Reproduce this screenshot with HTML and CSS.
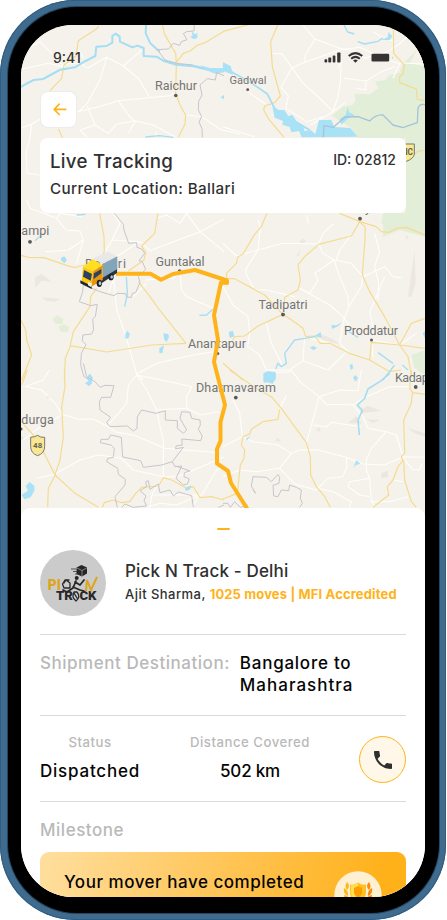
FILE: index.html
```html
<!DOCTYPE html>
<html lang="en">
<head>
<meta charset="utf-8">
<meta name="viewport" content="width=device-width, initial-scale=1">
<title>Live Tracking</title>
<link rel="stylesheet" href="styles.css">
</head>
<body>
<div class="phone">
<div class="bezel">
<main class="screen">
<section class="tracking">
<svg class="map" viewBox="21 25 404 500" width="404" height="500" aria-hidden="true">
  <rect x="21" y="25" width="404" height="500" fill="#f5f2eb"/>
  <g transform="scale(.33333)">
    <g class="road">
      <path d="M62 155L120 125L155 160L192 200M195 192L240 188L262 205L320 172L370 198L415 235L448 290M370 198L400 172L425 150M320 172L300 240L262 310L235 336M232 335L305 318L355 302L510 287L520 280M355 302L385 345L405 365L385 400M262 318L285 375L325 400L350 372L405 362L460 375L525 410M285 375L240 390L262 412M62 385L95 372L125 355M95 372L88 425L78 455L82 520L118 525M555 345L605 350L665 390L720 402M190 200L145 190L62 208M236 150L250 175M470 395L465 412"/>
    </g>
    <g class="yellow">
      <path d="M296 78L288 88L235 122L228 168L192 195L185 235L150 272M175 387L188 413M487 75L494 103L527 160L529 190L527 280L540 315L557 345L555 372L535 412M527 190L550 160L570 153L590 137L615 128L672 94"/>
    </g>
    <g class="river"><path stroke-width="6" d="M63 261Q85 247 101 240L129 237L146 228L181 209L225 202L249 187L286 168L289 140L320 138L337 128L337 108L347 101L359 110L360 125L397 142L412 137L431 144L431 168L470 170L490 182L530 192M438 75L437 100L451 130L479 155"/><path stroke-width="7" d="M490 182L529 194L580 198L630 210L672 210"/><path stroke-width="4" d="M436 411L478 407L520 412"/></g>
    <path class="water" d="M571 112L578 106L575 94L586 103L592 98L592 113L582 118ZM661 292L672 285V298ZM600 196L628 204L672 205V217L645 221L620 211Z"/>
    <path class="border" d="M583 75L582 93L560 95L550 101L561 119L544 125L539 136L520 130L506 147L472 149L495 180L530 190L578 195M672 227L650 218L646 240L622 236L600 255L606 285L596 304L595 330L605 350L597 366L606 386L607 412"/>
  </g>
  <g transform="translate(223 0) scale(.33333)">
    <path class="forest" d="M606 75H545L582 149L565 167L540 190L529 218L500 225L487 240L456 245L466 265L440 283L395 281L397 303L388 316L360 320L327 347L385 385L405 414L548 415V640H482L480 710L530 690L606 710Z"/>
    <path class="land" d="M530 75L595 75L606 100V200L560 190L582 149L568 130Z"/>
    <g class="road"><path d="M150 160L178 162L207 203L245 187L247 165L276 117L240 75M245 187L350 150L410 142L470 170L520 188L606 192M276 117L350 145L395 154L425 175L492 155L525 135L570 95M207 203L240 250L280 285L330 335L367 307M345 205L355 180L352 245L345 290L330 335L262 375M207 203L174 262L196 287L188 325L252 365L300 350M364 235L430 243L475 215L515 200M430 243L427 270L400 265M450 95L475 110L515 125M76 277L127 312M0 380L95 410M530 190L510 235"/></g>
    <g class="yellow"><path d="M0 94L75 75M164 75L143 125L148 200L172 288L155 308L125 318L122 330L138 358L183 412M511 75L512 160L544 195L540 222L530 230L530 248L580 267L583 298L606 302M553 480L583 455L606 450"/></g>
    <g class="river"><path stroke-width="5" d="M0 195L30 218L82 247L133 282L155 325L195 352L260 390"/><path stroke-width="4" d="M363 75L374 96L394 102M404 125L425 132L465 124L480 113"/></g>
    <path class="water" d="M0 187L23 198L30 224L0 213ZM147 313L162 330L184 330L196 349L208 344L226 372L245 378L243 393L263 390L277 402L288 360L325 360L334 381L382 384L404 410L236 412L228 393L205 397L200 381L178 374L180 363L155 353ZM355 374L350 358L368 345L374 321L378 337L395 346L373 357ZM475 120L495 111L496 96L508 108L500 120Z"/>
    <path class="border lake-border" d="M301 412L303 377L331 382L366 351L405 350L440 363Q460 342 480 345L510 375L540 383L565 374L583 368L585 325Q590 310 606 314"/>
    <path d="M540 432H574V463Q572 476 550 484L540 480Z" fill="#f9e892" stroke="#77776e" stroke-width="3"/>
    <text x="536" y="465" class="shield-label" font-size="25">NC</text>
  </g>
  <g transform="translate(0 200) scale(.33333)">
    <g fill="#ebe8df"><path d="M105 232L125 222L155 245L125 242L105 265ZM125 292L182 297L165 305L140 304Z"/></g>
    <path class="forest" d="M158 358L172 346L191 358L187 372L166 371ZM175 380L194 373L208 382L202 397L182 395Z"/>
    <g class="road"><path d="M80 0L90 25L170 55L198 90L240 93L250 120L205 150L135 155M170 55L180 40L245 50M250 120L230 190M315 155L336 120L360 70L340 40M336 120L420 125L450 152L520 125L600 95L672 58M600 95L560 40L540 70L500 45L470 55M600 95L672 155M350 170L380 150L420 125M340 225L350 330L375 400L410 522L470 490L580 465L640 455M435 240L520 235L540 215L545 270L560 290L640 325M410 522L430 540M440 250L400 290M345 225L325 280"/></g>
    <g class="yellow"><path d="M63 166L85 172L132 173L202 197L225 203L240 198L300 185L313 155L312 110L299 40M474 40L464 100L425 138L437 158L432 180L385 213M415 245L450 290L475 325L558 430M558 430L455 435L320 456L210 437M290 265L272 290L270 320L220 395L210 440L196 475L193 540M63 360L77 390L80 420L95 465L65 540"/></g>
    <g class="river"><path stroke-width="4" d="M105 122L120 109M230 45L257 43M379 230L382 282L374 320M598 346L620 345L638 328"/></g>
    <path class="water" d="M183 173L193 169L201 181L193 190L183 181ZM376 402L382 392L390 402L385 415L376 417ZM490 400L505 402L507 411L500 426L493 419ZM478 445L492 435L487 460L478 458ZM262 530L270 521L279 534L272 540L262 539Z"/>
    <path class="border" d="M343 40L370 73L372 90L386 130L410 128L411 142L425 147L434 160L417 182L427 185L437 208L415 230L420 247L407 278L397 280L394 292L380 291L377 281L351 280L342 287L300 275L250 254L248 275L238 305L272 317L292 313L286 350L278 357L281 389L275 402L249 405L247 422L258 434L244 460L242 496L252 530L270 540"/>
  </g>
  <g transform="translate(223 200) scale(.33333)">
    <path class="forest" d="M480 40H606V103L550 82L520 92L475 70ZM565 465L606 450V516L575 505Z"/>
    <g fill="#ece8e0"><path d="M230 125L240 115L250 125L232 132ZM220 170L230 150V165ZM555 290L575 150L578 250L565 290ZM545 115L553 105L556 117ZM285 400L325 415L355 435L300 420Z"/></g>
    <g class="road"><path d="M0 130L40 168L105 150L112 80L105 60M105 150L70 205L68 220L95 270L130 270L215 290M105 150L180 130L287 132L300 160L333 180L275 220L285 240L260 280L230 265L320 315L360 350L400 405M333 180L350 230L375 290L377 320L362 360L350 430L380 460M333 180L385 190L420 230L485 200L510 230L535 233M465 300L467 250L455 200L470 155L455 100M420 230L415 260L377 320M340 180L350 150L385 105M333 70L300 100L287 132M257 70L250 45M485 230L445 325L440 335L450 385L510 400M0 260L30 315L75 350L80 400L74 440L110 465L130 510L200 510L240 482L315 510L365 460M130 370L145 430L180 500M240 482L245 410L320 430M450 470L445 420L530 435L580 400"/></g>
    <g class="yellow"><path d="M132 40L115 80L95 103L60 162L45 170L40 190L10 220L12 236L35 236L125 285L180 343L220 370L240 385L248 410L275 408L292 430L320 430L380 460L440 480L500 515L535 510M180 343L105 378L65 408L35 410L30 420M183 320L185 292L225 270L232 240L225 195L245 170L287 133L385 108L410 65L350 40M410 65L427 82L425 130L418 225L440 275L485 350L530 435L555 470L565 525M410 65L460 80L475 95L500 97L520 85L550 82L606 105M440 480L445 427L530 435L606 445M530 435L565 370L606 355M0 490L60 540"/></g>
    <g class="river"><path stroke-width="4" d="M290 405L265 412L215 420L185 460L190 490L175 500L165 490L158 507M370 390L405 412M465 458L510 490M480 540L515 495M538 495L555 510"/></g>
    <path class="water" d="M17 395L30 393L34 409L20 414ZM325 375L340 376L357 367L345 379L327 387ZM280 404L293 396L296 413L285 412ZM261 443L270 438L282 443L272 451ZM380 494L388 492L391 505L383 510ZM122 523L134 515L158 517L158 536L148 550L121 545ZM599 400L606 393V415Z"/>
  </g>
  <g transform="translate(0 370) scale(.33333)">
    <g class="road"><path d="M77 50L125 60L165 100L185 132L235 148L280 147L325 170L350 187L400 195L495 235L655 248M75 50L130 30L148 0M70 210L115 175L185 135M110 325L165 312L240 270L295 255L365 265L400 300L490 320L530 320L560 310L672 260M410 15L440 60L470 120L480 170L490 210L490 320L455 375L450 412M410 15L385 45L380 100L325 165M410 15L510 35L575 50L560 80L560 115L600 135L655 125M470 120L560 115M455 375L580 375L605 375L650 300L672 290M440 412L480 400L530 405L600 375L575 412"/></g>
    <g class="yellow"><path d="M193 0L195 50L185 110L190 200L180 270L163 320L145 355L143 412M63 155L100 195L125 235L165 315L225 370L295 412M307 412L313 398L338 390L365 398L390 394L407 370L425 352L475 348L490 323L515 330L560 355L580 350L600 383L635 380L672 390M65 45L82 0"/></g>
    <path class="forest" d="M63 195L72 205L63 212ZM140 77L149 81L142 88Z"/>
    <path class="water" d="M263 20L270 11L277 23L276 40L267 49L255 39L265 33ZM65 374L84 362L77 348L89 336L103 348V362L92 382L73 388ZM555 355L568 348L575 347L568 360L557 362Z"/>
    <path class="border" d="M250 -20L260 20L285 35L300 52L315 46L342 47L332 82L305 82L298 95L300 120L332 142L320 157L330 170L382 168L400 183L411 175L412 140L425 120L468 130L496 122L496 150L532 152L532 175L550 190L560 180L540 145L545 125L570 127L575 145L600 150L601 165L595 178L607 198L602 212L545 207L547 225L528 228L527 237L550 232L517 275L485 285L430 292L422 272L368 261L364 202L332 195L325 208L303 208L301 218L333 225L343 235L340 262L323 265L320 275L353 295L355 313L376 328L375 345L345 380L352 412M365 412L375 402L400 412L440 408L432 392L438 378L420 362L440 350L437 335L445 332L450 358L475 342L480 368L510 360L520 378L535 366L575 377L580 412M517 275L525 290L545 288L535 310L528 325L550 345L562 342L568 327L552 320L553 308L570 303L527 288M655 412L672 405"/>
    <path d="M92 202Q105 201 113 196Q120 203 134 202V229Q134 250 113 257Q92 250 92 229Z" fill="#f9e892" stroke="#77776e" stroke-width="3"/>
    <text x="113" y="235" class="shield-label" text-anchor="middle" font-size="24">48</text>
  </g>
  <g transform="translate(223 370) scale(.33333)">
    <path class="forest" d="M580 0H606V14Z"/>
    <g fill="#ebe7de"><path d="M412 120L435 108L475 122L415 130ZM375 160L400 138L415 160ZM430 148L470 150L450 160ZM475 310L495 302V320L475 325ZM555 175L606 190V200L575 190ZM278 180L290 172L293 185ZM155 212L165 203L175 216Z"/></g>
    <g class="road"><path d="M190 75L170 118M30 90L50 130L58 200L0 230M58 200L90 215L165 225L205 250L170 295L100 305L50 300L0 320M205 250L230 240L285 240L370 262L420 282L485 285L540 260L606 262M170 295L215 342L280 360L315 325L360 320L372 290L370 262M250 220L275 130L288 80L230 35L205 0M205 5L125 10M288 80L350 60L405 62L415 0M288 80L310 103L390 105L430 80L500 50L560 50M390 105L420 140L435 175L490 185L520 195L540 260M270 165L310 170L325 157L415 170M490 185L445 235L430 270L430 300L440 325L445 390L455 410M440 325L380 335L375 350L410 375L440 380M445 395L500 395L555 380M285 355L330 365L385 395L380 412M510 330L540 335M540 265L570 298L590 300L597 280"/></g>
    <g class="yellow"><path d="M20 0L60 28L100 55L145 80L175 115L250 218L262 260L263 315L280 350L305 380L322 412M170 118L165 148L120 155L85 178L80 192L60 200L55 225L65 240L63 265L52 285L43 370L0 387M565 0L560 55L570 68L606 73M568 68L565 100L542 150L545 250L535 260L540 272L525 290L510 330L493 350L497 375L450 412M542 270L545 330L565 395L580 412"/></g>
    <g class="river"><path stroke-width="5" d="M500 10L475 32L435 57L425 85L403 105L418 122L405 150L409 195"/></g>
    <path class="water" d="M121 10L134 4L158 7L158 27L148 42L137 35L123 38ZM390 23L397 15L405 24L398 35ZM390 296L400 271L412 281L398 285ZM68 206L83 198L73 210Z"/>
    <path class="border" d="M0 400L15 400L22 412L35 395L52 412L75 405M90 360L98 370L85 348L90 320L130 322L145 335L165 313L170 322L168 340L150 346L152 378L165 380L175 360L197 362L200 345L220 352L235 360L232 385L238 400L230 412"/>
  </g>
  <g fill="#595959"><circle cx="175.800" cy="95.500" r="1.800"/><circle cx="247.700" cy="89.700" r="1.400"/><circle cx="30" cy="241.800" r="1.900"/><circle cx="179.600" cy="271" r="1.700"/><circle cx="360" cy="218.700" r="1.900"/><circle cx="283" cy="314.500" r="1.900"/><circle cx="371.500" cy="340" r="1.500"/><circle cx="217.700" cy="353.500" r="1.600"/><circle cx="235.800" cy="397.600" r="1.900"/><circle cx="415.700" cy="387" r="1.900"/><circle cx="21" cy="429" r="1.600"/></g>
  <g class="place">
    <text x="155" y="90" textLength="42">Raichur</text>
    <text x="229.500" y="84" font-size="11" textLength="37">Gadwal</text>
    <text x="21.300" y="235" textLength="28">ampi</text>
    <text x="85" y="268" textLength="41">Bellari</text>
    <text x="155.500" y="265.500" textLength="49">Guntakal</text>
    <text x="358" y="212" textLength="13">ly</text>
    <text x="258.500" y="308.500" textLength="49">Tadipatri</text>
    <text x="344" y="334.500" textLength="54">Proddatur</text>
    <text x="188" y="347.500" textLength="58">Anantapur</text>
    <text x="196" y="392" textLength="80">Dharmavaram</text>
    <text x="395" y="381.500" textLength="40">Kadapa</text>
    <text x="21.300" y="423.500" textLength="32.500">durga</text>
  </g>
  <path class="route" d="M116 273.700H150.500L161 279.700L173 274L195 270L227 280.500V283L221 282.500L214 315L218 340L214 362L225 405L220.500 422V441L217 449V463.500L228 471L231 483L248 510"/>
  <g transform="translate(70 245) scale(.33333)">
    <path d="M68 40L116 20L142 36L98 57Z" fill="#e8e8e8"/>
    <path d="M98 57L142 34V76L98 103Z" fill="#83a5ba"/>
    <path d="M82 108L141 73V84L88 119Z" fill="#293541"/>
    <path d="M39 65L68 42L98 61L70 78Z" fill="#ffdf20"/>
    <path d="M39 65L70 78L64 125L35 110Z" fill="#ffc710"/>
    <path d="M70 78L98 61V105L64 125Z" fill="#e9950c"/>
    <path d="M42 75L66 87L62 107L39 95ZM72 85L94 72V85L70 103Z" fill="#2a4460"/>
    <path d="M31 106L65 123V132L31 115Z" fill="#1f2930"/>
    <path d="M54 111L66 115L64 127L54 121Z" fill="#f5edd8"/>
    <ellipse cx="88" cy="115" rx="8" ry="11" fill="#17202a"/><ellipse cx="90" cy="115" rx="4" ry="6" fill="#b9c0c6"/>
    <ellipse cx="123" cy="96" rx="8" ry="10" fill="#17202a"/><ellipse cx="125" cy="96" rx="4" ry="5" fill="#b9c0c6"/>
  </g>
</svg>
<header class="status-bar">
  <span class="time">9:41</span>
  <svg width="70" height="14" viewBox="0 0 70 14" fill="#353333">
    <rect x=".500" y="8.300" width="2.700" height="3.200" rx=".8"/><rect x="4.300" y="6.600" width="2.900" height="4.900" rx=".8"/><rect x="8.700" y="4.600" width="2.700" height="6.900" rx=".8"/><rect x="13.200" y="1.500" width="3.300" height="10" rx=".8"/>
    <g fill="none" stroke="#353333" stroke-width="2"><path d="M24.700 5.100Q31.400-.8 38.300 5.100M27.200 7.800Q31.400 4 35.800 7.800"/></g><path d="M29.100 9.400Q31.400 7.600 33.800 9.400L31.400 11.700Z"/>
    <rect x="47.500" y="2.800" width="17.700" height="7.700" rx="1.200"/><path d="M68.200 5.400Q69.400 6.500 68.200 8Z" fill="#aaa"/>
  </svg>
</header>
<button class="back" aria-label="Back"><svg width="14" height="13" viewBox="0 0 14 13" fill="none" stroke="#ffb31a" stroke-width="1.700" stroke-linecap="round" stroke-linejoin="round"><path d="M12.700 6.300H1.300M6.200 1.200L1.200 6.300L6.200 11.500"/></svg></button>
<div class="location-card">
  <div class="card-top"><h1>Live Tracking</h1><span class="shipment-id">ID: 02812</span></div>
  <p class="current">Current Location: Ballari</p>
</div>
</section>
<section class="sheet">
  <div class="handle"></div>
  <div class="mover">
    <svg class="logo" width="66" height="66" viewBox="40 550 66 66">
      <circle cx="73" cy="583" r="33" fill="#cbcbcb"/>
      <text x="47.800" y="590" class="brand" fill="#dda51b" font-size="14" textLength="13" lengthAdjust="spacingAndGlyphs">PI</text>
      <text x="56" y="600.300" class="brand" fill="#292929" font-size="13.500" textLength="17" lengthAdjust="spacingAndGlyphs">TR</text>
      <text x="79.500" y="600.300" class="brand" fill="#292929" font-size="13.500" textLength="17" lengthAdjust="spacingAndGlyphs">CK</text>
      <path d="M76.500 567.500L81.500 565L87 567.500V573.500L82 576.500L76.500 574Z" fill="#252525"/><path d="M77 568L82 570.500L86.800 568M82 570.500V576" stroke="#aaa" stroke-width=".7" fill="none"/>
      <path d="M71 569H76M73 571.500H77M75 574H78" stroke="#333" stroke-width=".8"/>
      <circle cx="76.700" cy="578" r="2" fill="#242424"/>
      <g fill="none" stroke="#282828" stroke-width="1.800" stroke-linecap="round" stroke-linejoin="round"><path d="M76 581L73 588L67 592L63 590M75 582L80 585L84 580M73 587L80 590L84 591"/><path stroke-width="1.300" d="M69 580L65 580L62.500 584L64 588L70 588M64 583L66 580L70 583V588M74 592Q71 597 76 601Q81 597 77 592ZM74 593L77 598"/></g>
      <path d="M86 591L87 580L91 590L97 577" stroke="#dda51b" stroke-width="2" fill="none"/>
    </svg>
    <div class="mover-text"><h2>Pick N Track - Delhi</h2><p class="agent">Ajit Sharma, <strong>1025 moves | MFI Accredited</strong></p></div>
  </div>
  <div class="destination"><span class="dest-label">Shipment Destination:</span><span class="dest-value">Bangalore to<br><span class="line-two">Maharashtra</span></span></div>
  <div class="stats">
    <div class="stat status-stat"><span class="stat-label">Status</span><span class="stat-value dispatched">Dispatched</span></div>
    <div class="stat distance-stat"><span class="stat-label">Distance Covered</span><span class="stat-value">502 km</span></div>
    <button class="call" aria-label="Call mover"><svg width="18" height="18" viewBox="3 3 18 18"><path fill="#302f2f" d="M6.620 10.790c1.440 2.830 3.760 5.140 6.590 6.590l2.200-2.200c.27-.27.670-.36 1.020-.24 1.120.37 2.330.57 3.570.57.550 0 1 .45 1 1V20c0 .55-.45 1-1 1-9.390 0-17-7.610-17-17 0-.55.450-1 1-1h3.500c.55 0 1 .45 1 1 0 1.250.2 2.450.57 3.570.110.350.030.740-.25 1.020l-2.200 2.200z"/></svg></button>
  </div>
  <h3>Milestone</h3>
  <div class="milestone"><p>Your mover have completed</p>
    <svg class="badge" width="48" height="48" viewBox="0 0 48 48"><circle cx="24" cy="24" r="23.700" fill="#fff0d1"/>
      <path fill="#ffc022" d="M24 11.500Q28 14.500 32 13.500V22Q31 30 24 33Q17 30 16 22V13.500Q20 14.500 24 11.500Z"/><path fill="#ffdf51" d="M24 12Q19 15 17 14V22Q18 29 24 32Z"/><path fill="#ff9d00" d="M24 15L28 17V22Q27 25 24 27Q21 25 20 22V17Z"/>
      <g fill="#ffb720"><path d="M13 11Q17 15 13 19Q10 15 13 11ZM10 17Q15 20 14 25Q9 23 10 17ZM10 24Q16 25 16 30Q10 30 10 24Z"/></g><g fill="#ff8b05"><path d="M35 11Q31 15 35 19Q38 15 35 11ZM38 17Q33 20 34 25Q39 23 38 17ZM38 24Q32 25 32 30Q38 30 38 24Z"/></g>
    </svg>
  </div>
</section>
</main>
</div>
</div>
</body>
</html>
```
FILE: styles.css
```css
* { box-sizing: border-box; }
body { margin: 0; background: #fff; font-family: Inter, "Noto Sans", sans-serif; color: #303030; }
h1, h2, h3, p { margin: 0; font-weight: 500; white-space: nowrap; }
button { padding: 0; font: inherit; }
.phone { width: 446px; height: 919.500px; padding: 7px 7.500px; border-radius: 75px; background: #3f6b8e; box-shadow: inset 0 0 0 1px #315d80; }
.bezel { width: 431px; height: 905.500px; padding: 18px 13.500px 15.500px; border-radius: 69px; background: #000; box-shadow: 0 0 0 1px #23455f; }
.screen { width: 404px; height: 872px; overflow: hidden; border-radius: 52px; background: #fff; }
.tracking { position: relative; height: 483px; padding: 0 19px; }
.map { position: absolute; left: 0; top: 0; z-index: 0; }
.status-bar, .back, .location-card { position: relative; z-index: 1; }
.status-bar { display: flex; justify-content: space-between; align-items: center; height: 66px; padding: 0 12.500px 0 13px; }
.time { color: #353333; font-size: 14px; line-height: 16px; font-weight: 500; }
.back { display: flex; align-items: center; justify-content: center; width: 37px; height: 37px; padding-left: 2px; border: 1px solid #ececec; border-radius: 8px; background: #fff; }
.location-card { height: 75px; margin-top: 10px; padding: 12px 10px; border-radius: 8px; background: #fff; }
.card-top { display: flex; justify-content: space-between; }
h1 { font-size: 18.700px; line-height: 23px; letter-spacing: .3px; }
.shipment-id { font-size: 14px; line-height: 20px; font-weight: 500; }
.current { margin-top: 6px; font-size: 15.200px; line-height: 20px; letter-spacing: .4px; }
.sheet { position: relative; z-index: 2; height: 389px; padding: 20px 19px 0; border-radius: 9px 9px 0 0; background: #fff; }
.handle { width: 13px; height: 2px; margin: 0 auto; border-radius: 1px; background: #ffb31a; }
.mover { display: flex; gap: 19px; height: 105px; padding-top: 19.500px; border-bottom: 1.500px solid #dadada; }
.mover-text { padding-top: 10px; }
h2 { font-size: 17px; line-height: 22px; letter-spacing: .17px; }
.agent { margin-top: 4px; font-size: 13px; line-height: 17px; letter-spacing: .46px; }
.agent strong { color: #ffb31a; font-weight: 700; letter-spacing: .14px; }
.destination { display: flex; gap: 10px; height: 81px; padding-top: 17px; border-bottom: 1.500px solid #dadada; font-size: 17px; line-height: 22px; font-weight: 500; white-space: nowrap; }
.dest-label, h3 { color: #b9b9b9; letter-spacing: .53px; }
.dest-value { color: #050505; letter-spacing: .75px; }
.line-two { letter-spacing: 1px; }
.stats { display: flex; align-items: flex-start; height: 86px; padding-top: 17px; border-bottom: 1.500px solid #dadada; font-weight: 500; white-space: nowrap; }
.stat { display: flex; flex-direction: column; align-items: center; gap: 9px; }
.status-stat { width: 100px; }
.distance-stat { width: 120px; margin-left: 50px; }
.stat-label { color: #b9b9b9; font-size: 13.200px; line-height: 18px; letter-spacing: .5px; }
.stat-value { color: #050505; font-size: 17px; line-height: 22px; letter-spacing: -.2px; }
.dispatched { letter-spacing: .8px; }
.call { display: flex; align-items: center; justify-content: center; width: 47px; height: 47px; margin: 3px 0 0 auto; border: 1px solid #ffb31a; border-radius: 50%; background: #fff8e9; }
h3 { margin-top: 17px; font-size: 17px; line-height: 22px; }
.milestone { display: flex; justify-content: space-between; height: 90px; margin-top: 11px; padding: 19px 24px; border-radius: 9px; color: #050505; background: linear-gradient(105deg, #ffdf9f 0%, #ffc557 48%, #ffb11a 90%); }
.milestone p { font-size: 17px; line-height: 22px; letter-spacing: .52px; }
.road { fill: none; stroke: #fffefb; stroke-width: 3.200; stroke-linejoin: round; }
.yellow { fill: none; stroke: #f5db91; stroke-width: 3.600; stroke-linejoin: round; }
.river { fill: none; stroke: #a4def4; stroke-linejoin: round; }
.water { fill: #a9e1f6; }
.forest { fill: #e2eed7; }
.land { fill: #f5f2eb; }
.border { fill: none; stroke: #c7c5cd; stroke-width: 3; stroke-linejoin: round; }
.lake-border { stroke: #a5c4d8; stroke-width: 4; }
.place { fill: #747474; font-family: Roboto, sans-serif; font-size: 12.500px; paint-order: stroke; stroke: #f5f2eb; stroke-width: 1px; }
.shield-label { fill: #666354; font-family: Roboto, sans-serif; font-weight: 700; }
.route { fill: none; stroke: #ffb31a; stroke-width: 4; stroke-linejoin: round; }
.brand { font-family: Roboto, sans-serif; font-weight: 900; }
```
